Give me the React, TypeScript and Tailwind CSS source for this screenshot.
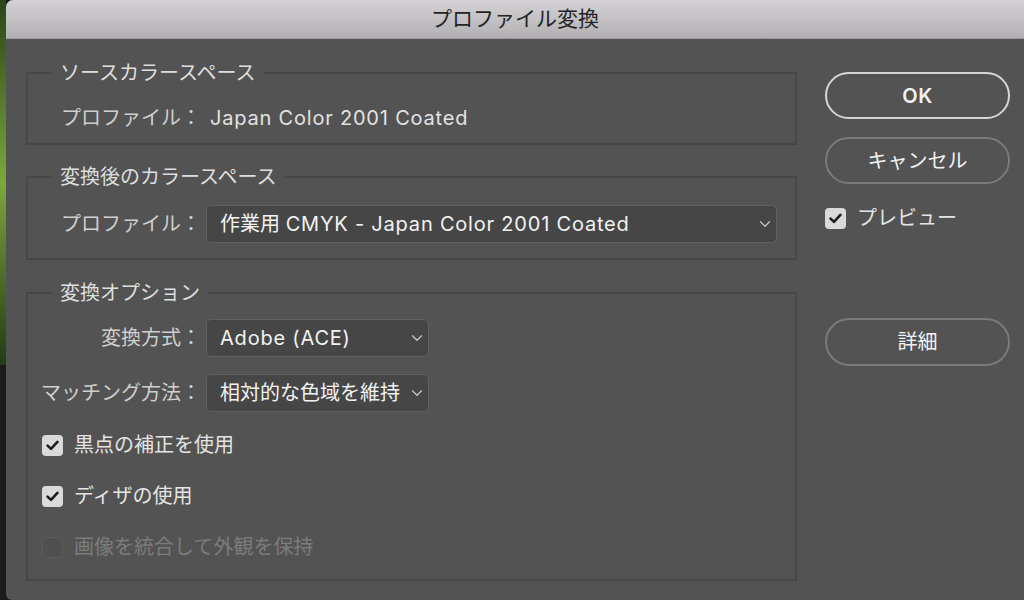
import React from 'react';
import { ChevronDown } from 'lucide-react';

const CheckMark = () => (
  <svg width="13" height="11" viewBox="0 0 13 11">
    <path
      d="M1.6 5.6 L5 8.9 L11.4 1.9"
      fill="none"
      stroke="#1e1e1e"
      strokeWidth="2.6"
      strokeLinecap="round"
      strokeLinejoin="round"
    />
  </svg>
);

interface CheckboxProps {
  label: string;
  checked?: boolean;
  disabled?: boolean;
}

const Checkbox: React.FC<CheckboxProps> = ({ label, checked, disabled }) => (
  <label className="flex h-[30px] items-center gap-[11px]">
    {disabled ? (
      <span className="h-[21px] w-[21px] rounded-[4px] border border-[#5b5b5b] bg-[#505050]" />
    ) : (
      <span className="flex h-[21px] w-[21px] items-center justify-center rounded-[4px] bg-[#dadada]">
        {checked && <CheckMark />}
      </span>
    )}
    <span className={disabled ? 'text-[#7c7c7c]' : 'text-[#e4e4e4]'}>{label}</span>
  </label>
);

interface SelectProps {
  children: React.ReactNode;
  className?: string;
}

const Select: React.FC<SelectProps> = ({ children, className }) => (
  <div
    className={`flex items-center justify-between rounded-[5px] border-[1.5px] border-[#616161] bg-[#464646] pl-[13px] pr-[2px] text-[#f2f2f2] ${className ?? ''}`}
  >
    <span className="whitespace-nowrap">{children}</span>
    <ChevronDown size={18} strokeWidth={1.6} className="text-[#c8c8c8]" />
  </div>
);

const Latin: React.FC<{ children: React.ReactNode }> = ({ children }) => (
  <span className="tracking-[0.8px]">{children}</span>
);

const Row: React.FC<{ label: string; children: React.ReactNode; className?: string }> = ({
  label,
  children,
  className,
}) => (
  <div className={`flex items-center gap-[5px] ${className ?? ''}`}>
    <span className="w-[173px] whitespace-nowrap text-right text-[#cfcfcf]">{label}</span>
    {children}
  </div>
);

const Group: React.FC<{ title: string; className?: string; children: React.ReactNode }> = ({
  title,
  className,
  children,
}) => (
  <fieldset className={`border-2 border-[#474747] ${className ?? ''}`}>
    <legend className="ml-6 px-2 leading-[24px] text-[#dedede]">{title}</legend>
    {children}
  </fieldset>
);

const PillButton: React.FC<{ label: string; primary?: boolean; className?: string }> = ({
  label,
  primary,
  className,
}) => (
  <button
    className={`flex w-[185px] items-center justify-center rounded-full border-2 text-[#f2f2f2] ${
      primary ? 'border-[#d6d6d6] font-semibold tracking-[0.5px]' : 'border-[#7a7a7a]'
    } ${className ?? ''}`}
  >
    {label}
  </button>
);

export default function App() {
  return (
    <div className="flex h-[600px] w-[1024px] overflow-hidden bg-[#1b1b1b] font-['Inter','Noto_Sans_CJK_JP',sans-serif] text-[20px]">
      <div className="flex w-[6px] flex-col">
        <div className="h-[365px] bg-linear-to-b from-[#2a451c] via-[#7ea838] to-[#253b19]" />
        <div className="flex-1 bg-[#1b1b1b]" />
      </div>

      <div className="flex flex-1 flex-col overflow-hidden rounded-tl-[7px] rounded-bl-[6px] bg-[#535353]">
        <div className="flex h-[39px] items-center justify-center border-b border-[#9c9a9c] bg-linear-to-b from-[#d4d2d4] to-[#b2b0b2] text-[21px] text-[#242424]">
          プロファイル変換
        </div>

        <div className="flex gap-[28px] pl-5 pt-[22px]">
          <div className="flex w-[771px] flex-col">
            <Group title="ソースカラースペース" className="h-[84px]">
              <Row label="プロファイル：" className="mt-[14px] h-[37px]">
                <span className="ml-[4px] whitespace-nowrap text-[#e2e2e2]">
                  <Latin>Japan Color 2001 Coated</Latin>
                </span>
              </Row>
            </Group>

            <Group title="変換後のカラースペース" className="mt-[20px] h-[95px]">
              <Row label="プロファイル：" className="mt-[16px]">
                <Select className="h-[38px] w-[571px]">
                  作業用 <Latin>CMYK - Japan Color 2001 Coated</Latin>
                </Select>
              </Row>
            </Group>

            <Group title="変換オプション" className="mt-[21px] h-[300px]">
              <Row label="変換方式：" className="mt-[14px]">
                <Select className="h-[38px] w-[223px]">
                  <Latin>Adobe (ACE)</Latin>
                </Select>
              </Row>
              <Row label="マッチング方法：" className="mt-[17px]">
                <Select className="h-[38px] w-[223px]">相対的な色域を維持</Select>
              </Row>
              <div className="mt-[18px] flex flex-col gap-[21px] pl-[14px]">
                <Checkbox label="黒点の補正を使用" checked />
                <Checkbox label="ディザの使用" checked />
                <Checkbox label="画像を統合して外観を保持" disabled />
              </div>
            </Group>
          </div>

          <div className="flex w-[185px] flex-col pt-[11px]">
            <PillButton label="OK" primary className="h-[47px]" />
            <PillButton label="キャンセル" className="mt-[18px] h-[47px]" />
            <div className="mt-[19px]">
              <Checkbox label="プレビュー" checked />
            </div>
            <PillButton label="詳細" className="mt-[85px] h-[48px]" />
          </div>
        </div>
      </div>
    </div>
  );
}
